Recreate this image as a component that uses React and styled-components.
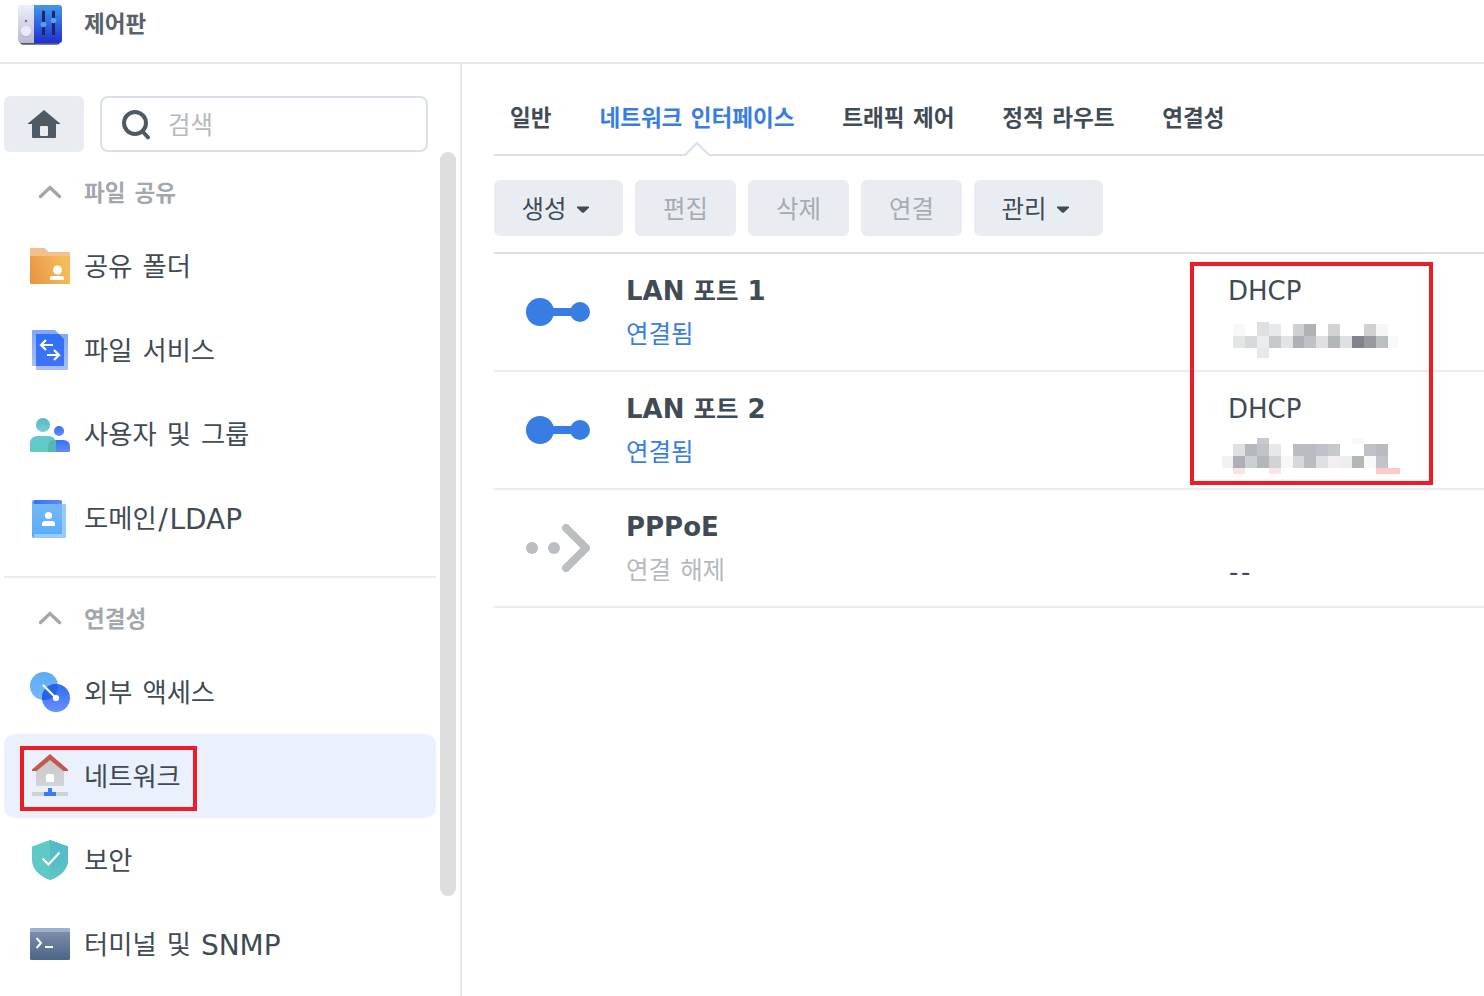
import React from 'react';
import styled, { createGlobalStyle, css } from 'styled-components';

const GlobalStyle = createGlobalStyle`
  * { box-sizing: border-box; }
  body {
    margin: 0;
    background: #fff;
    color: #414b55;
    font-family: 'DejaVu Sans', 'Noto Sans CJK KR', sans-serif;
    word-spacing: 0.034em;
    overflow: hidden;
  }
  svg { display: block; flex: none; }
`;

/* Hangul glyphs are set slightly smaller than the Latin ones beside them. */
const Hangul = styled.span`
  font-size: 0.94em;
  line-height: 1;
  vertical-align: var(--hangul-rise, 0px);
`;

const Slash = styled.span`
  margin: 0 0.06em;
`;

function Label({ children }) {
  return children
    .split(/([가-힣]+|\/)/)
    .filter(Boolean)
    .map((run, i) => {
      if (run === '/') return <Slash key={i}>/</Slash>;
      return /[가-힣]/.test(run) ? <Hangul key={i}>{run}</Hangul> : run;
    });
}

const Window = styled.div`
  display: flex;
  flex-direction: column;
  height: 996px;
  width: 1484px;
  overflow: hidden;
`;

const TitleBar = styled.header`
  display: flex;
  flex: none;
  height: 64px;
  border-bottom: 2px solid #e3e8ef;
  padding-left: 16px;
`;

const Title = styled.h1`
  margin: 0 0 0 20px;
  font-size: 24px;
  font-weight: 700;
  line-height: 48px;
  color: #59626b;
`;

const Body = styled.div`
  display: flex;
  flex: 1;
  min-height: 0;
`;

const Sidebar = styled.aside`
  display: flex;
  flex: none;
  width: 462px;
  border-right: 2px solid #e3e8ef;
  padding: 32px 4px 0;
`;

const SidebarMain = styled.div`
  width: 432px;
`;

const SearchRow = styled.div`
  display: flex;
  gap: 16px;
  height: 56px;
  margin-bottom: 8px;
`;

const HomeButton = styled.button`
  display: flex;
  align-items: center;
  justify-content: center;
  width: 80px;
  border: 0;
  border-radius: 6px;
  padding: 0;
  background: #e9edf2;
`;

/* Text beside an icon sits a pixel below the icon's centre line. */
const SideText = styled.span`
  padding-top: 2px;
`;

const SearchBox = styled.div`
  display: flex;
  align-items: center;
  gap: 17px;
  width: 328px;
  border: 2px solid #d8dfe9;
  border-radius: 8px;
  padding-left: 19px;
  font-size: 26px;
  color: #b5b9bd;
`;

const ScrollThumb = styled.div`
  width: 16px;
  height: 744px;
  margin: 56px 0 0 4px;
  border-radius: 8px;
  background: #dedede;
`;

const Section = styled.section`
  & + & {
    margin-top: 16px;
    border-top: 2px solid #e9edf2;
    padding-top: 8px;
  }
`;

const SectionHeader = styled.h2`
  display: flex;
  align-items: center;
  gap: 20px;
  height: 64px;
  margin: 0;
  padding-left: 32px;
  font-size: 24px;
  font-weight: 700;
  color: #a3a7ac;
`;

const NavItem = styled.div`
  --hangul-rise: 1px;
  position: relative;
  display: flex;
  align-items: center;
  gap: 14px;
  height: 84px;
  padding-left: 26px;
  border-radius: 10px;
  font-size: 28px;
  line-height: 34px;
  word-spacing: 0.04em;
  white-space: pre;
  background: ${(p) => (p.$selected ? '#eaf1fd' : 'transparent')};

  ${SideText} {
    padding-top: 4px;
  }
`;

const Highlight = styled.div`
  position: absolute;
  border: 4px solid #ee1c25;
  pointer-events: none;
  ${(p) =>
    p.$area === 'nav'
      ? css`left: 16px; top: 12px; width: 177px; height: 65px;`
      : css`left: 696px; top: 8px; width: 243px; height: 223px;`}
`;

const Main = styled.main`
  flex: 1;
  min-width: 0;
  padding-left: 32px;
`;

const Tabs = styled.nav`
  display: flex;
  gap: 47.9px;
  height: 92px;
  border-bottom: 2px solid #d8dfe9;
  padding: 30px 0 0 16px;
`;

const Tab = styled.div`
  position: relative;
  height: 62px;
  font-size: 24px;
  font-weight: 700;
  line-height: 48px;
  word-spacing: 0;
  white-space: nowrap;
  color: ${(p) => (p.$active ? '#387de4' : '#414b55')};
`;

const Notch = styled.svg`
  position: absolute;
  left: 50%;
  bottom: -1px;
  margin-left: -14px;
`;

const Toolbar = styled.div`
  display: flex;
  gap: 12px;
  height: 98px;
  border-bottom: 2px solid #d8dfe9;
  padding-top: 24px;
`;

const ToolButton = styled.button`
  display: flex;
  align-items: center;
  justify-content: center;
  gap: 10px;
  width: ${(p) => (p.$menu ? 129 : 101)}px;
  height: 56px;
  border: 0;
  border-radius: 6px;
  padding: 1px ${(p) => (p.$menu ? 5 : 0)}px 0 0;
  background: #e9edf2;
  color: ${(p) => (p.disabled ? '#a7acb1' : '#414b55')};
  font-family: inherit;
  font-size: 26px;
`;

const InterfaceList = styled.div`
  position: relative;
`;

const InterfaceRow = styled.div`
  display: grid;
  grid-template-columns: 132px 602px 1fr;
  height: 118px;
  border-bottom: 2px solid #e9edf2;
`;

const IconCell = styled.div`
  display: flex;
  align-items: center;
  padding-left: 32px;
`;

const TextCell = styled.div`
  padding-top: 15px;
`;

const Line = styled.div`
  --hangul-rise: ${(p) => (p.$strong ? '0px' : '1px')};
  height: 44px;
  font-size: 26px;
  line-height: 44px;
  white-space: nowrap;
  font-weight: ${(p) => (p.$strong ? 700 : 400)};
  word-spacing: ${(p) => (p.$strong ? 0 : '0.034em')};
  color: ${(p) => ({ on: '#387de4', off: '#b5b9bd' })[p.$state] || '#414b55'};
`;

const EmptyLine = styled(Line)`
  padding-top: 1px;
  padding-left: 1px;
  letter-spacing: 2.5px;
`;

const AppIcon = () => (
  <svg width="48" height="48" viewBox="16 0 48 48">
    <defs>
      <linearGradient id="cpGrey" x1="0" y1="0" x2="0" y2="1"><stop stopColor="#edf0fb" /><stop offset="1" stopColor="#b9b9d3" /></linearGradient>
      <linearGradient id="cpBlue" x1="0" y1="0" x2="0" y2="1"><stop stopColor="#4498e7" /><stop offset="1" stopColor="#1f2fd6" /></linearGradient>
    </defs>
    <rect x="20" y="8" width="40" height="36.7" rx="3" fill="#555768" />
    <path d="M21 5h13v38H21a3 3 0 0 1-3-3V8a3 3 0 0 1 3-3z" fill="url(#cpGrey)" />
    <path d="M34 5h25a3 3 0 0 1 3 3v32a3 3 0 0 1-3 3H34z" fill="url(#cpBlue)" />
    <circle cx="26" cy="21" r="1.2" fill="#70758a" />
    <circle cx="26" cy="32" r="5.2" fill="#a9aac4" />
    <circle cx="26" cy="31" r="5.2" fill="#e8eaf7" />
    <path d="M43.5 12v24M53.5 12v24" stroke="#14286c" strokeWidth="3" strokeLinecap="round" />
    <path d="M43.5 35.5v1M53.5 35.5v1" stroke="#8591bd" strokeWidth="2" />
    <circle cx="43.5" cy="24.5" r="2.8" fill="#55a0f5" />
    <circle cx="53.5" cy="20.5" r="2.8" fill="#55a0f5" />
  </svg>
);

const HomeIcon = () => (
  <svg width="34" height="28" viewBox="27 110 34 28">
    <path fillRule="evenodd" fill="#505a64" d="M44 110 60.7 124H56v13a1 1 0 0 1-1 1H33a1 1 0 0 1-1-1v-13h-4.7zM41 126a1 1 0 0 0-1 1v8a1 1 0 0 0 1 1h6a1 1 0 0 0 1-1v-8a1 1 0 0 0-1-1z" />
  </svg>
);

const SearchIcon = () => (
  <svg width="30" height="32" viewBox="121 108 30 32">
    <circle cx="135" cy="123" r="11" fill="none" stroke="#505a64" strokeWidth="4" />
    <path d="m143 132 5 5.3" stroke="#505a64" strokeWidth="4" strokeLinecap="round" />
  </svg>
);

const Chevron = () => (
  <svg width="28" height="20" viewBox="0 0 28 20">
    <path d="m4.5 14.5 9.5-9 9.5 9" fill="none" stroke="#a3a7ac" strokeWidth="3.4" strokeLinecap="round" />
  </svg>
);

const Caret = () => (
  <svg width="14" height="8" viewBox="0 0 14 8">
    <path d="M1 1.5h12v1.2L8.2 7.3a1.8 1.8 0 0 1-2.4 0L1 2.7z" fill="#414b55" />
  </svg>
);

const navIcons = {
  folder: (
    <>
      <defs><linearGradient id="fo" x1="0" y1="1" x2="1" y2=".7"><stop stopColor="#e99145" /><stop offset="1" stopColor="#f4bd59" /></linearGradient></defs>
      <path d="M1 2h13.5l4 4H39a1 1 0 0 1 1 1v4H0V3a1 1 0 0 1 1-1z" fill="#f3bf8b" />
      <path d="M0 10h40v27a1 1 0 0 1-1 1H1a1 1 0 0 1-1-1z" fill="url(#fo)" />
      <circle cx="27.5" cy="24" r="4.5" fill="#fff" />
      <path d="M20 34v-2q0-2 2-2h10q2 0 2 2v2z" fill="#fff" />
    </>
  ),
  service: (
    <>
      <defs>
        <linearGradient id="fs" x1="0" y1="0" x2="0" y2="1"><stop stopColor="#2f70f6" /><stop offset="1" stopColor="#4173fa" /></linearGradient>
        <linearGradient id="fl" x1="0" y1="0" x2="0" y2="1"><stop stopColor="#80a6f9" /><stop offset="1" stopColor="#a8bffc" /></linearGradient>
      </defs>
      <rect x="6" y="4" width="32" height="36" rx="1" fill="url(#fl)" />
      <path d="M3 0h22l9 9v27H3a1 1 0 0 1-1-1V1a1 1 0 0 1 1-1z" fill="url(#fl)" />
      <path d="M6 4h23l5 5v27H6z" fill="url(#fs)" />
      <path d="M23 15H11m5-5-5 5 5 5M17 25h12m-5-5 5 5-5 5" fill="none" stroke="#fff" strokeWidth="2.2" />
    </>
  ),
  users: (
    <>
      <defs>
        <linearGradient id="ug" x1="0" y1="0" x2="0" y2="1"><stop stopColor="#55b9ca" /><stop offset="1" stopColor="#75d0ca" /></linearGradient>
        <linearGradient id="ub" x1="0" y1="0" x2="0" y2="1"><stop stopColor="#3473f6" /><stop offset="1" stopColor="#628bfb" /></linearGradient>
      </defs>
      <circle cx="13" cy="11" r="7.1" fill="url(#ug)" />
      <circle cx="29" cy="17" r="5.1" fill="url(#ub)" />
      <path d="M18 38v-5q0-7 7-7h8q7 0 7 7v4q0 1-1 1z" fill="url(#ub)" />
      <path d="M0 37v-7q0-8 8-8h10q8 0 8 8v8H1q-1 0-1-1z" fill="#5fcac6" />
      <path d="M18 38v-5q0-7 7-7h.5l.5 3v9z" fill="#54b7b5" />
    </>
  ),
  ldap: (
    <>
      <defs>
        <linearGradient id="lb" x1="0" y1="0" x2="0" y2="1"><stop stopColor="#76baf9" /><stop offset="1" stopColor="#5aacf8" /></linearGradient>
        <linearGradient id="ls"><stop stopColor="#3071f6" /><stop offset="1" stopColor="#648bfb" /></linearGradient>
      </defs>
      <rect x="2" y="2" width="28" height="38" rx="2" fill="#58aaf8" />
      <rect x="4" y="6" width="32" height="34" rx="1.3" fill="#95cafb" />
      <rect x="4" y="2" width="28" height="5" rx="1.5" fill="url(#ls)" />
      <path d="M2 4q0 2 2 2h28v30H5q-1 0-1 2l-2-1z" fill="url(#lb)" />
      <circle cx="18.5" cy="17.5" r="3.6" fill="#fff" />
      <path d="M12 28v-2q0-3 3-3h7q3 0 3 3v2z" fill="#fff" />
    </>
  ),
  access: (
    <>
      <defs>
        <linearGradient id="ea" x1="0" y1="0" x2="0" y2="1"><stop stopColor="#5aabf8" /><stop offset="1" stopColor="#74b9f9" /></linearGradient>
        <linearGradient id="eb" x1="0" y1="0" x2="0" y2="1"><stop stopColor="#2e6cf6" /><stop offset="1" stopColor="#6990fb" /></linearGradient>
        <clipPath id="ec"><circle cx="14" cy="14" r="14" /></clipPath>
      </defs>
      <circle cx="14" cy="14" r="14" fill="url(#ea)" />
      <circle cx="26" cy="26" r="14" fill="url(#eb)" />
      <circle cx="26" cy="26" r="14" fill="#2763e6" clipPath="url(#ec)" />
      <path d="m13.5 13.5 12.5 12.5" stroke="#fff" strokeWidth="2.2" strokeLinecap="round" />
      <circle cx="26" cy="26" r="3.1" fill="#fff" />
    </>
  ),
  network: (
    <>
      <defs><linearGradient id="nw" x1="0" y1="0" x2="0" y2="1"><stop stopColor="#c6c8ca" /><stop offset="1" stopColor="#d2d4d5" /></linearGradient></defs>
      <path d="M6 13 20 2l14 11v16q0 1-1 1H7q-1 0-1-1z" fill="url(#nw)" />
      <path d="M2 13.5 20-2l18 15.5V15h-4.5L20 4 6.5 15H2z" fill="#c7564d" />
      <path d="M16 26v-6q0-2 2-2h4q2 0 2 2v6z" fill="#fff" />
      <path d="M2 36h36v4H2z" fill="#cfd2d5" />
      <path d="M14 36h4v-4h4v4h4v4H14z" fill="#397cf4" />
    </>
  ),
  shield: (
    <>
      <defs><linearGradient id="sh" x1="0" y1="0" x2="0" y2="1"><stop stopColor="#55b9ca" /><stop offset=".55" stopColor="#57bdc9" /><stop offset="1" stopColor="#5fc9c6" /></linearGradient></defs>
      <path d="M20 0 38 6.5V20C38 30 29 37 20 40 11 37 2 30 2 20V6.5z" fill="#5fc9c6" />
      <path d="M20 0 38 6.5V20C38 30 29 37 20 40z" fill="url(#sh)" />
      <path d="m12.5 18.5 6 6L29.500 12.500" fill="none" stroke="#fff" strokeWidth="2.2" />
    </>
  ),
  terminal: (
    <>
      <defs><linearGradient id="te" x1="0" y1="0" x2="0" y2="1"><stop stopColor="#8293ae" /><stop offset="1" stopColor="#4b6586" /></linearGradient></defs>
      <rect y="4" width="40" height="32" rx="1.5" fill="url(#te)" />
      <path d="M1.5 4h37Q40 4 40 5.5V8H0V5.5Q0 4 1.5 4z" fill="#9db1ce" />
      <path d="m6.5 14 4.5 5-4.5 5M15 23h8" fill="none" stroke="#fff" strokeWidth="2" />
    </>
  ),
};

const NavIcon = ({ name }) => (
  <svg width="40" height="40" viewBox="0 0 40 40" overflow="visible">{navIcons[name]}</svg>
);

const ConnectedIcon = () => (
  <svg width="64" height="28" viewBox="0 0 64 28">
    <path d="M14 10h40v8H14z" fill="#387de4" />
    <circle cx="14" cy="14" r="14" fill="#387de4" />
    <circle cx="54" cy="14" r="10" fill="#387de4" />
  </svg>
);

const DisconnectedIcon = () => (
  <svg width="64" height="48" viewBox="0 0 64 48">
    <circle cx="6" cy="24" r="6" fill="#babdc1" />
    <circle cx="28" cy="24" r="6" fill="#babdc1" />
    <path d="m40 4 20 20-20 20" fill="none" stroke="#babdc1" strokeWidth="8" strokeLinecap="round" strokeLinejoin="round" />
  </svg>
);

/* Redacted addresses: [x, y, width, height, colour], measured from the line's corner. */
const masks = [
  [
    [5, 11, 12, 12, '#f8f8f8'], [29, 9, 12, 14, '#dfe0e2'], [41, 11, 12, 12, '#e8e9eb'], [65, 11, 11, 12, '#cfd0d2'],
    [76, 11, 12, 12, '#afb2b6'], [100, 11, 12, 12, '#d2d3d5'], [136, 11, 12, 12, '#cfd1d2'], [148, 11, 12, 12, '#f5f7f7'],
    [5, 23, 12, 12, '#e4e5e7'], [17, 23, 12, 12, '#d8d9db'], [29, 23, 12, 12, '#ebecee'], [41, 23, 12, 12, '#c8c9cc'],
    [53, 23, 12, 12, '#e3e4e6'], [65, 23, 11, 12, '#adb0b7'], [76, 23, 12, 12, '#c0c0c5'], [88, 23, 12, 12, '#dfe0e2'],
    [100, 23, 12, 12, '#b2b7ba'], [112, 23, 12, 12, '#dfe0e2'], [124, 23, 12, 12, '#80858d'], [136, 23, 12, 12, '#979a9e'],
    [148, 23, 12, 12, '#babfc2'], [160, 23, 10, 12, '#f8faf9'], [29, 35, 12, 10, '#e9e9ea'],
  ],
  [
    [29, 7, 12, 6, '#c8c9cd'], [124, 7, 12, 6, '#f8f8f8'],
    [5, 13, 12, 12, '#dee0e1'], [17, 13, 12, 12, '#b5b8bc'], [29, 13, 12, 12, '#c2c3c8'], [41, 13, 12, 12, '#e7e8ea'],
    [65, 13, 23, 12, '#bbbcc1'], [88, 13, 12, 12, '#c1c2c8'], [100, 13, 12, 12, '#c6c9cc'], [136, 13, 12, 12, '#c1c2c8'],
    [148, 13, 12, 12, '#b7bcc0'],
    [-6, 25, 11, 12, '#f1f3f2'], [5, 25, 12, 12, '#adb1b7'], [17, 25, 12, 12, '#cbd0d3'], [29, 25, 12, 12, '#b3b8bb'],
    [41, 25, 12, 12, '#d0d2d4'], [53, 25, 12, 12, '#f7f7f7'], [65, 25, 11, 12, '#d7d8da'], [76, 25, 12, 12, '#b8bdc0'],
    [88, 25, 12, 12, '#dfe0e2'], [100, 25, 12, 12, '#f1efef'], [112, 25, 12, 12, '#eeeeee'], [124, 25, 12, 12, '#b2b7ba'],
    [136, 25, 12, 12, '#f8faf9'], [148, 25, 12, 12, '#c3c4ca'],
    [5, 37, 12, 6, '#fce4e6'], [41, 37, 12, 6, '#fce4e6'], [148, 37, 24, 6, '#fccacb'],
  ],
];

const Mask = ({ cells }) => (
  <svg width="172" height="44" overflow="visible" shapeRendering="crispEdges">
    {cells.map(([x, y, w, h, fill]) => (
      <rect key={`${x}-${y}`} x={x} y={y} width={w} height={h} fill={fill} />
    ))}
  </svg>
);

const sections = [
  {
    title: '파일 공유',
    items: [
      { icon: 'folder', label: '공유 폴더' },
      { icon: 'service', label: '파일 서비스' },
      { icon: 'users', label: '사용자 및 그룹' },
      { icon: 'ldap', label: '도메인/LDAP' },
    ],
  },
  {
    title: '연결성',
    items: [
      { icon: 'access', label: '외부 액세스' },
      { icon: 'network', label: '네트워크', selected: true },
      { icon: 'shield', label: '보안' },
      { icon: 'terminal', label: '터미널 및 SNMP' },
    ],
  },
];

const tabs = ['일반', '네트워크 인터페이스', '트래픽 제어', '정적 라우트', '연결성'];

const actions = [
  { label: '생성', menu: true },
  { label: '편집', disabled: true },
  { label: '삭제', disabled: true },
  { label: '연결', disabled: true },
  { label: '관리', menu: true },
];

const interfaces = [
  { name: 'LAN 포트 1', status: '연결됨', on: true, mode: 'DHCP', mask: masks[0] },
  { name: 'LAN 포트 2', status: '연결됨', on: true, mode: 'DHCP', mask: masks[1] },
  { name: 'PPPoE', status: '연결 해제', on: false, mode: '', address: '--' },
];

export default function App() {
  return (
    <Window>
      <GlobalStyle />
      <TitleBar>
        <AppIcon />
        <Title><Label>제어판</Label></Title>
      </TitleBar>
      <Body>
        <Sidebar>
          <SidebarMain>
            <SearchRow>
              <HomeButton><HomeIcon /></HomeButton>
              <SearchBox><SearchIcon /><SideText><Label>검색</Label></SideText></SearchBox>
            </SearchRow>
            {sections.map((s) => (
              <Section key={s.title}>
                <SectionHeader><Chevron /><SideText><Label>{s.title}</Label></SideText></SectionHeader>
                {s.items.map((item) => (
                  <NavItem key={item.label} $selected={item.selected}>
                    <NavIcon name={item.icon} />
                    <SideText><Label>{item.label}</Label></SideText>
                    {item.selected && <Highlight $area="nav" />}
                  </NavItem>
                ))}
              </Section>
            ))}
          </SidebarMain>
          <ScrollThumb />
        </Sidebar>
        <Main>
          <Tabs>
            {tabs.map((t, i) => (
              <Tab key={t} $active={i === 1}>
                <Label>{t}</Label>
                {i === 1 && (
                  <Notch width="28" height="16" viewBox="0 0 28 16">
                    <path d="M2 14 14 2l12 12v2H2z" fill="#fff" />
                    <path d="M1 14h1L14 2l12 12h1" fill="none" stroke="#d8dfe9" strokeWidth="2" />
                  </Notch>
                )}
              </Tab>
            ))}
          </Tabs>
          <Toolbar>
            {actions.map((a) => (
              <ToolButton key={a.label} $menu={a.menu} disabled={a.disabled}>
                <span><Label>{a.label}</Label></span>
                {a.menu && <Caret />}
              </ToolButton>
            ))}
          </Toolbar>
          <InterfaceList>
            {interfaces.map((n) => (
              <InterfaceRow key={n.name}>
                <IconCell>{n.on ? <ConnectedIcon /> : <DisconnectedIcon />}</IconCell>
                <TextCell>
                  <Line $strong><Label>{n.name}</Label></Line>
                  <Line $state={n.on ? 'on' : 'off'}><Label>{n.status}</Label></Line>
                </TextCell>
                <TextCell>
                  <Line>{n.mode}</Line>
                  {n.mask ? <Mask cells={n.mask} /> : <EmptyLine>{n.address}</EmptyLine>}
                </TextCell>
              </InterfaceRow>
            ))}
            <Highlight $area="list" />
          </InterfaceList>
        </Main>
      </Body>
    </Window>
  );
}
